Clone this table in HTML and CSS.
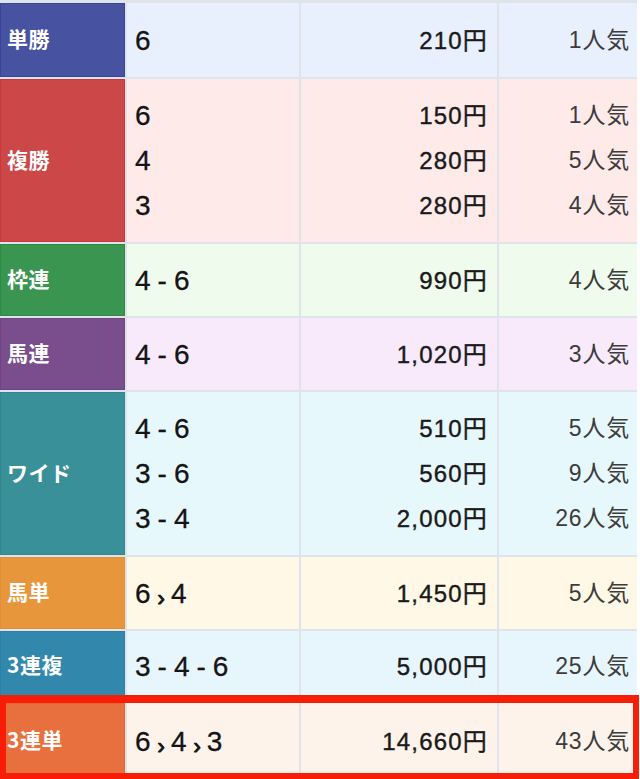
FILE: index.html
```html
<!DOCTYPE html>
<html lang="ja">
<head>
<meta charset="utf-8">
<title>払戻金</title>
<link rel="stylesheet" href="styles.css">
</head>
<body>
<div class="payout">
  <div class="row r-tan h-first">
    <div class="kind">単勝</div>
    <div class="cell combo"><span>6</span></div>
    <div class="cell amount"><span>210円</span></div>
    <div class="cell pop"><span>1人気</span></div>
  </div>
  <div class="row r-fuku h-triple">
    <div class="kind">複勝</div>
    <div class="cell combo"><span>6</span><span>4</span><span>3</span></div>
    <div class="cell amount"><span>150円</span><span>280円</span><span>280円</span></div>
    <div class="cell pop"><span>1人気</span><span>5人気</span><span>4人気</span></div>
  </div>
  <div class="row r-waku h-single">
    <div class="kind">枠連</div>
    <div class="cell combo"><span>4-6</span></div>
    <div class="cell amount"><span>990円</span></div>
    <div class="cell pop"><span>4人気</span></div>
  </div>
  <div class="row r-umaren h-single">
    <div class="kind">馬連</div>
    <div class="cell combo"><span>4-6</span></div>
    <div class="cell amount"><span>1,020円</span></div>
    <div class="cell pop"><span>3人気</span></div>
  </div>
  <div class="row r-wide h-triple">
    <div class="kind">ワイド</div>
    <div class="cell combo"><span>4-6</span><span>3-6</span><span>3-4</span></div>
    <div class="cell amount"><span>510円</span><span>560円</span><span>2,000円</span></div>
    <div class="cell pop"><span>5人気</span><span>9人気</span><span>26人気</span></div>
  </div>
  <div class="row r-umatan h-single">
    <div class="kind">馬単</div>
    <div class="cell combo"><span>6<i class="arr">›</i>4</span></div>
    <div class="cell amount"><span>1,450円</span></div>
    <div class="cell pop"><span>5人気</span></div>
  </div>
  <div class="row r-sanfuku h-short">
    <div class="kind">3連複</div>
    <div class="cell combo"><span>3-4-6</span></div>
    <div class="cell amount"><span>5,000円</span></div>
    <div class="cell pop"><span>25人気</span></div>
  </div>
  <div class="row r-santan h-last">
    <div class="kind">3連単</div>
    <div class="cell combo"><span>6<i class="arr">›</i>4<i class="arr">›</i>3</span></div>
    <div class="cell amount"><span>14,660円</span></div>
    <div class="cell pop"><span>43人気</span></div>
  </div>
  <div class="highlight"></div>
</div>
</body>
</html>
```

FILE: styles.css
```css
html, body {
  margin: 0;
  padding: 0;
  background: #ffffff;
}

body {
  width: 640px;
  height: 779px;
  overflow: hidden;
  font-family: "Liberation Sans", "Noto Sans CJK JP", sans-serif;
}

.payout {
  position: relative;
  width: 637px;
  padding-top: 3px;
  background: #dfe3ea;
  display: flex;
  flex-direction: column;
  gap: 2px;
}

.row {
  display: grid;
  grid-template-columns: 125px 172px 196px 138px;
  column-gap: 2px;
}

.h-first { height: 74px; }
.h-single { height: 72px; }
.h-triple { height: 163px; }
.h-short { height: 70px; }
.h-last { height: 76px; }

.kind {
  box-sizing: border-box;
  display: flex;
  align-items: center;
  padding-left: 6px;
  padding-bottom: 4px;
  color: #ffffff;
  font-family: "Noto Sans CJK JP", sans-serif;
  font-weight: 700;
  font-size: 21px;
  letter-spacing: 0.5px;
  border: 1px solid transparent;
}

.cell {
  display: flex;
  flex-direction: column;
  justify-content: center;
}

.cell span {
  display: block;
  height: 45px;
  line-height: 45px;
  white-space: nowrap;
}

.combo {
  padding-left: 8px;
  font-size: 28px;
  letter-spacing: 7px;
  color: #141414;
  -webkit-text-stroke: 0.3px #141414;
}

.combo .arr {
  font-style: normal;
  font-size: 22px;
  letter-spacing: 6px;
  vertical-align: -3px;
  -webkit-text-stroke: 1px #141414;
}

.amount {
  align-items: flex-end;
  padding-right: 9px;
  font-size: 24px;
  letter-spacing: 1.2px;
  color: #1a1a1a;
  -webkit-text-stroke: 0.4px #1a1a1a;
}

.pop {
  align-items: flex-end;
  padding-right: 7px;
  font-size: 23px;
  letter-spacing: 0.8px;
  color: #3c3c3c;
}

/* row colours */
.r-tan .kind { background: #4753a0; border-color: #36449c; }
.r-tan .cell { background: #e9f0fd; }

.r-fuku .kind { background: #cc4748; border-color: #c8393b; }
.r-fuku .cell { background: #ffeaea; }

.r-waku .kind { background: #3a9550; border-color: #2b8c44; }
.r-waku .cell { background: #effbec; }

.r-umaren .kind { background: #7a4e8c; border-color: #704385; }
.r-umaren .cell { background: #f8e9fb; }

.r-wide .kind { background: #3a9099; border-color: #2f8890; }
.r-wide .cell { background: #e7f8fd; }

.r-umatan .kind { background: #e8963c; border-color: #e58f33; }
.r-umatan .cell { background: #fff8e6; }

.r-sanfuku .kind { background: #3287ad; border-color: #2a80a6; }
.r-sanfuku .cell { background: #e7f6fd; }

.r-santan .kind { background: #e8703e; border-color: #e56834; }
.r-santan .cell { background: #fdf3ea; }

.highlight {
  position: absolute;
  left: 0;
  top: 695px;
  width: 639px;
  height: 84px;
  box-sizing: border-box;
  border: 6px solid #f81d06;
  border-top-width: 8px;
  pointer-events: none;
}
```
